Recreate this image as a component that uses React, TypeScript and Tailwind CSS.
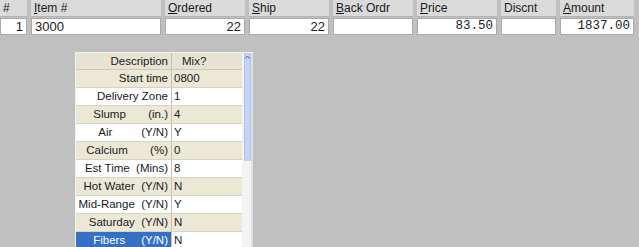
type Col = {
  accel?: string;
  rest: string;
  width: string;
  value: string;
  align: 'left' | 'right';
  mono?: boolean;
};

const cols: Col[] = [
  { rest: '#', width: 'w-[27px]', value: '1', align: 'right' },
  { accel: 'I', rest: 'tem #', width: 'w-[130px]', value: '3000', align: 'left' },
  { accel: 'O', rest: 'rdered', width: 'w-[80px]', value: '22', align: 'right' },
  { accel: 'S', rest: 'hip', width: 'w-[80px]', value: '22', align: 'right' },
  { accel: 'B', rest: 'ack Ordr', width: 'w-[80px]', value: '', align: 'right' },
  { accel: 'P', rest: 'rice', width: 'w-[80px]', value: '83.50', align: 'right', mono: true },
  { rest: 'Discnt', width: 'w-[55px]', value: '', align: 'right' },
  { accel: 'A', rest: 'mount', width: 'w-[74px]', value: '1837.00', align: 'right', mono: true },
];

// descriptions are space-padded like the original fixed-width strings
const rows = [
  { desc: 'Start time', mix: '0800' },
  { desc: 'Delivery Zone', mix: '1' },
  { desc: 'Slump       (in.)', mix: '4' },
  { desc: 'Air         (Y/N)', mix: 'Y' },
  { desc: 'Calcium       (%)', mix: '0' },
  { desc: 'Est Time  (Mins)', mix: '8' },
  { desc: 'Hot Water  (Y/N)', mix: 'N' },
  { desc: 'Mid-Range  (Y/N)', mix: 'Y' },
  { desc: 'Saturday  (Y/N)', mix: 'N' },
  { desc: 'Fibers     (Y/N)', mix: 'N' },
];

export default function App() {
  return (
    <div
      className="w-[639px] h-[247px] overflow-hidden bg-[#c0c0c0] text-[#1a1a1a]"
      style={{ fontFamily: '"Liberation Sans", Arial, sans-serif' }}
    >
      {/* line item header + entry boxes */}
      <div className="flex gap-[4px]">
        {cols.map((c, i) => (
          <div key={i} className={`${c.width} flex flex-col`}>
            <div className="h-[17px] bg-[#dadada] border-b border-[#b4b4b4] pl-[3px] text-[12px] leading-[16px]">
              {c.accel && <span className="underline underline-offset-[1px]">{c.accel}</span>}
              {c.rest}
            </div>
            <div
              className={`mt-[1px] h-[17px] bg-white border border-[#a9a9a9] px-[3px] leading-[15px] ${
                c.align === 'right' ? 'text-right' : 'text-left'
              } ${c.mono ? 'text-[12.5px]' : 'text-[13px]'}`}
              style={c.mono ? { fontFamily: '"Liberation Mono", "Courier New", monospace' } : undefined}
            >
              {c.value}
            </div>
          </div>
        ))}
      </div>

      {/* mix options grid */}
      <div className="mt-[17px] ml-[75px] w-[178px] flex border-l border-t border-[#f2f1ea] text-[11.5px]">
        <div className="w-[166px]">
          <div className="flex h-[17px] bg-[#e6e3d4] border-b border-[#cbc8b9]">
            <div className="w-[96px] border-r border-[#c5c2b3] text-right pr-[3px] leading-[16px]">Description</div>
            <div className="flex-1 pl-[10px] leading-[16px]">Mix?</div>
          </div>
          {rows.map((r, i) => {
            const beige = i % 2 === 0;
            const selected = i === rows.length - 1;
            return (
              <div
                key={r.desc}
                className={`flex h-[18px] border-b border-[#d6d3c4] ${beige ? 'bg-[#ebe8d6]' : 'bg-white'}`}
              >
                <div
                  className={`w-[96px] border-r border-[#c5c2b3] text-right pr-[3px] leading-[17px] whitespace-pre ${
                    selected ? 'bg-[#3570c6] text-white' : ''
                  }`}
                >
                  {r.desc}
                </div>
                <div className={`flex-1 pl-[2px] leading-[17px] ${selected ? 'bg-white' : ''}`}>{r.mix}</div>
              </div>
            );
          })}
        </div>
        {/* scrollbar */}
        <div className="w-[11px] flex bg-[#f3f3f3] border-r-2 border-[#e2e2e2]">
          <div className="ml-[2px] w-[7px] h-[108px] bg-[#c3d4f7] border-x border-[#b0c3ec] flex justify-center pt-[2px]">
            <svg width="5" height="4" viewBox="0 0 5 4">
              <path d="M0.5 3.5 L2.5 1 L4.5 3.5" fill="none" stroke="#4d5c7a" strokeWidth="1" />
            </svg>
          </div>
        </div>
      </div>
    </div>
  );
}
